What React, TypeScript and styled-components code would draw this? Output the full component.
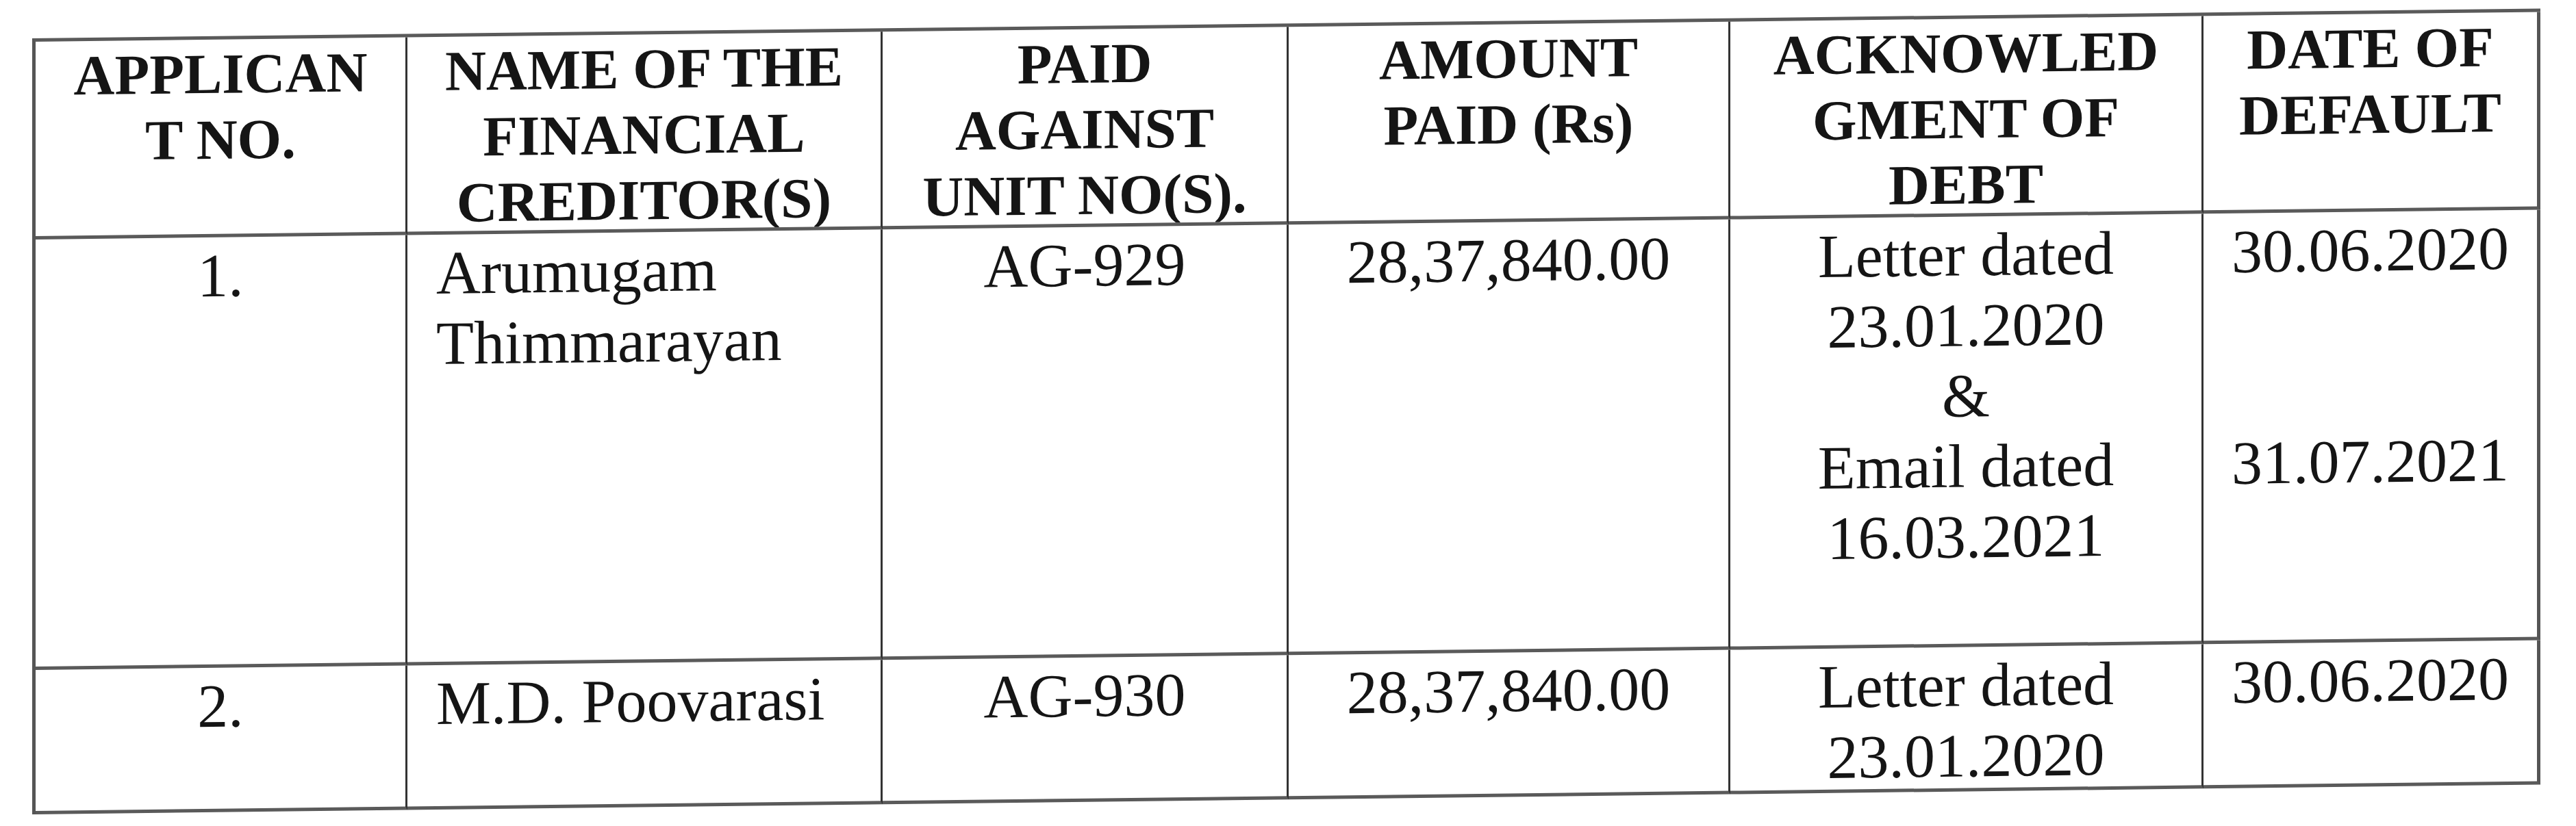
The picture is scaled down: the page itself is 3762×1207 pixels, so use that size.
import styled, { createGlobalStyle } from "styled-components";

const GlobalStyle = createGlobalStyle`
  html, body {
    margin: 0;
    padding: 0;
    background: #ffffff;
  }
  body {
    font-family: "Liberation Serif", "Times New Roman", serif;
    color: #151515;
  }
`;

type Align = "center" | "left";

interface Row {
  cells: { lines: string[]; align?: Align }[];
}

const headers = [
  ["APPLICAN", "T NO."],
  ["NAME OF THE", "FINANCIAL", "CREDITOR(S)"],
  ["PAID", "AGAINST", "UNIT NO(S)."],
  ["AMOUNT", "PAID (Rs)"],
  ["ACKNOWLED", "GMENT OF", "DEBT"],
  ["DATE OF", "DEFAULT"],
];

const rows: Row[] = [
  {
    cells: [
      { lines: ["1."] },
      { lines: ["Arumugam", "Thimmarayan"], align: "left" },
      { lines: ["AG-929"] },
      { lines: ["28,37,840.00"] },
      { lines: ["Letter dated", "23.01.2020", "&", "Email dated", "16.03.2021"] },
      { lines: ["30.06.2020", "", "", "31.07.2021"] },
    ],
  },
  {
    cells: [
      { lines: ["2."] },
      { lines: ["M.D. Poovarasi"], align: "left" },
      { lines: ["AG-930"] },
      { lines: ["28,37,840.00"] },
      { lines: ["Letter dated", "23.01.2020"] },
      { lines: ["30.06.2020"] },
    ],
  },
];

const App = () => {
  return (
    <>
      <GlobalStyle />
      <Page>
        <Sheet>
          {headers.map((lines, i) => (
            <HeadCell key={`h${i}`} $last={i === headers.length - 1}>
              {lines.map((l, j) => (
                <Line key={j}>{l}</Line>
              ))}
            </HeadCell>
          ))}
          {rows.map((row, r) =>
            row.cells.map((cell, c) => (
              <BodyCell
                key={`r${r}c${c}`}
                $align={cell.align ?? "center"}
                $last={c === row.cells.length - 1}
              >
                {cell.lines.map((l, j) => (
                  <Line key={j}>{l || "\u00a0"}</Line>
                ))}
              </BodyCell>
            ))
          )}
        </Sheet>
      </Page>
    </>
  );
};

const Page = styled.div`
  padding: 56px 0 0 47px;
  width: 3762px;
  height: 1207px;
  box-sizing: border-box;
  overflow: hidden;
`;

// scanned page: horizontal rules drift upward to the right, verticals stay upright
const Sheet = styled.div`
  display: grid;
  grid-template-columns: 543px 694px 593px 645px 691px 492px;
  grid-template-rows: 289px 629px 211px;
  width: max-content;
  border-top: 5px solid #5a5a5a;
  border-left: 5px solid #555;
  transform-origin: 0 0;
  transform: skewY(-0.68deg);
`;

const Cell = styled.div<{ $last?: boolean }>`
  box-sizing: border-box;
  border-right: ${(p) => (p.$last ? "5px solid #555" : "3px solid #333")};
  border-bottom: 5px solid #5a5a5a;
  overflow: hidden;
`;

const HeadCell = styled(Cell)`
  padding-top: 2px;
  text-align: center;
  font-weight: 700;
  font-size: 83px;
  line-height: 96px;
`;

const BodyCell = styled(Cell)<{ $align: Align }>`
  padding-top: 4px;
  padding-left: ${(p) => (p.$align === "left" ? "42px" : "0")};
  text-align: ${(p) => p.$align};
  font-size: 90px;
  line-height: 103px;
`;

const Line = styled.div`
  white-space: nowrap;
`;

export default App;
